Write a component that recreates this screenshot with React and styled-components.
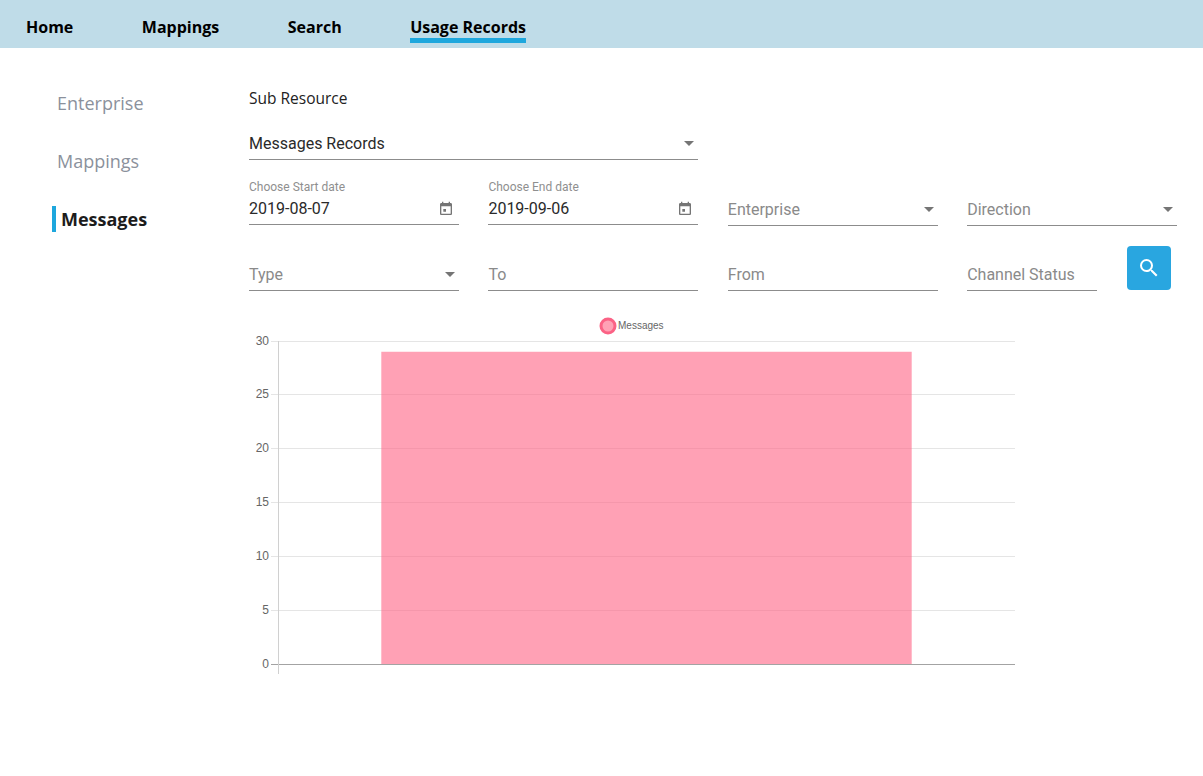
import React from 'react';
import styled, { createGlobalStyle } from 'styled-components';

const GlobalStyle = createGlobalStyle`
  html, body {
    margin: 0;
    padding: 0;
    background: #fff;
  }
  * {
    box-sizing: border-box;
  }
`;

const Page = styled.div`
  width: 1203px;
  height: 776px;
  overflow: hidden;
`;

const TopNav = styled.nav`
  height: 48px;
  background: #bfdce8;
  display: flex;
  gap: 68.5px;
  padding-left: 26px;
`;

const NavItem = styled.a`
  height: 43px;
  padding-top: 16px;
  font: 700 16px/22px 'Open Sans', sans-serif;
  color: #000;
  border-bottom: 5px solid ${(p) => (p.$active ? '#1ea7dd' : 'transparent')};
`;

const Body = styled.div`
  display: flex;
  padding-top: 26px;
`;

const Sidebar = styled.aside`
  width: 249px;
  flex: none;
  padding: 16px 0 0 52px;
  display: flex;
  flex-direction: column;
  gap: 32px;
`;

const SideItem = styled.div`
  height: 26px;
  font: ${(p) => (p.$active ? 700 : 400)} 18px/26px 'Open Sans', sans-serif;
  color: ${(p) => (p.$active ? '#1c1c1c' : '#8b919c')};
  padding-left: 5px;
  border-left: ${(p) => (p.$active ? '4px solid #1ea7dd' : 'none')};
`;

const Main = styled.main`
  flex: 1;
`;

const SectionLabel = styled.div`
  font: 400 15.5px/20px 'Open Sans', sans-serif;
  color: #222;
  margin-top: 14px;
`;

const SelectField = styled.div`
  height: 32px;
  width: ${(p) => (p.$wide ? '449px' : '210px')};
  margin-top: ${(p) => (p.$wide ? '20px' : '0')};
  display: flex;
  align-items: center;
  justify-content: space-between;
  border-bottom: 1px solid #8c8c8c;
  font: 400 16px/20px Roboto, sans-serif;
  color: ${(p) => (p.$filled ? '#2a2a2a' : '#8a8a8a')};
  align-self: end;
`;

const Caret = styled.span`
  width: 0;
  height: 0;
  margin-right: 4px;
  border-left: 5.5px solid transparent;
  border-right: 5.5px solid transparent;
  border-top: 5px solid #757575;
`;

const FieldGrid = styled.div`
  display: grid;
  grid-template-columns: repeat(4, 210px);
  column-gap: 29.4px;
  grid-auto-rows: 46px;
  row-gap: 19px;
  margin-top: 20px;
`;

const DateField = styled.div`
  display: flex;
  flex-direction: column;
  height: 45px;
  border-bottom: 1px solid #8c8c8c;
`;

const DateLabel = styled.label`
  font: 400 12px/14px Roboto, sans-serif;
  color: #8f8f8f;
`;

const DateValue = styled.div`
  display: flex;
  align-items: center;
  justify-content: space-between;
  padding-right: 5px;
  font: 400 16px/20px Roboto, sans-serif;
  color: #2a2a2a;
  margin-top: 5px;
`;

const TextField = styled.div`
  height: 32px;
  width: ${(p) => (p.$short ? '130px' : '100%')};
  display: flex;
  align-items: center;
  align-self: end;
  border-bottom: 1px solid #8c8c8c;
  font: 400 16px/20px Roboto, sans-serif;
  color: #8a8a8a;
`;

const LastCell = styled.div`
  display: flex;
  gap: 30px;
  align-items: flex-end;
`;

const SearchButton = styled.button`
  width: 44px;
  height: 44px;
  flex: none;
  border: 0;
  padding: 0;
  border-radius: 4px;
  background: #29a6e0;
  color: #fff;
  display: flex;
  align-items: center;
  justify-content: center;
  margin-bottom: 1px;
`;

const ChartWrap = styled.div`
  margin-top: 25px;
  width: 780px;
  height: 366px;
`;

const ChartSvg = styled.svg`
  display: block;
`;

const CalendarIcon = () => (
  <svg width="16" height="16" viewBox="0 0 24 24" fill="#757575">
    <path d="M12 12H8v4h4v-4zM16 1v2H8V1H6v2H5c-1.11 0-1.99.9-1.99 2L3 19c0 1.1.89 2 2 2h14c1.1 0 2-.9 2-2V5c0-1.1-.9-2-2-2h-1V1h-2zm3 18H5V8h14v11z" />
  </svg>
);

const SearchIcon = () => (
  <svg width="24" height="24" viewBox="0 0 24 24" fill="#fff">
    <path d="M15.5 14h-.79l-.28-.27A6.47 6.47 0 0 0 16 9.5 6.5 6.5 0 1 0 9.5 16c1.61 0 3.09-.59 4.23-1.57l.27.28v.79l5 4.99L20.49 19l-4.99-5zm-6 0C7.01 14 5 11.99 5 9.5S7.01 5 9.5 5 14 7.01 14 9.5 11.99 14 9.5 14z" />
  </svg>
);

// svg origin sits at page (249, 316)
const ticks = [30, 25, 20, 15, 10, 5, 0];
const plot = { left: 29, right: 766, top: 25, bottom: 348 };
const bar = { left: 132.3, right: 662.7, value: 29 };

function BarChart() {
  const step = (plot.bottom - plot.top) / 30;
  const barTop = plot.bottom - bar.value * step;

  return (
    <ChartSvg width="780" height="366" viewBox="0 0 780 366">
      <circle cx="359" cy="10" r="7" fill="rgba(255,99,132,0.6)" stroke="#fb6285" strokeWidth="3" />
      <text x="369" y="13" fontFamily="Liberation Sans, Arial, sans-serif" fontSize="10" fill="#666">
        Messages
      </text>
      {ticks.map((t) => {
        const y = Math.floor(plot.bottom - t * step + 0.01) + 0.5;
        return (
          <g key={t}>
            <line x1={plot.left - 7} x2={plot.right} y1={y} y2={y} stroke={t === 0 ? '#a3a3a3' : '#e5e5e5'} />
            <text
              x={plot.left - 9}
              y={y + 3}
              textAnchor="end"
              fontFamily="Liberation Sans, Arial, sans-serif"
              fontSize="12"
              fill="#666"
            >
              {t}
            </text>
          </g>
        );
      })}
      <line x1={plot.left + 0.5} x2={plot.left + 0.5} y1={plot.top} y2={plot.bottom + 10} stroke="#d0d0d0" />
      <rect
        x={bar.left}
        y={barTop}
        width={bar.right - bar.left}
        height={plot.bottom - barTop}
        fill="rgba(255,99,132,0.6)"
      />
    </ChartSvg>
  );
}

export default function App() {
  return (
    <Page>
      <GlobalStyle />
      <TopNav>
        <NavItem>Home</NavItem>
        <NavItem>Mappings</NavItem>
        <NavItem>Search</NavItem>
        <NavItem $active>Usage Records</NavItem>
      </TopNav>
      <Body>
        <Sidebar>
          <SideItem>Enterprise</SideItem>
          <SideItem>Mappings</SideItem>
          <SideItem $active>Messages</SideItem>
        </Sidebar>
        <Main>
          <SectionLabel>Sub Resource</SectionLabel>
          <SelectField $wide $filled>
            Messages Records
            <Caret />
          </SelectField>
          <FieldGrid>
            <DateField>
              <DateLabel>Choose Start date</DateLabel>
              <DateValue>
                2019-08-07
                <CalendarIcon />
              </DateValue>
            </DateField>
            <DateField>
              <DateLabel>Choose End date</DateLabel>
              <DateValue>
                2019-09-06
                <CalendarIcon />
              </DateValue>
            </DateField>
            <SelectField>
              Enterprise
              <Caret />
            </SelectField>
            <SelectField>
              Direction
              <Caret />
            </SelectField>
            <SelectField>
              Type
              <Caret />
            </SelectField>
            <TextField>To</TextField>
            <TextField>From</TextField>
            <LastCell>
              <TextField $short>Channel Status</TextField>
              <SearchButton aria-label="search">
                <SearchIcon />
              </SearchButton>
            </LastCell>
          </FieldGrid>
          <ChartWrap>
            <BarChart />
          </ChartWrap>
        </Main>
      </Body>
    </Page>
  );
}
